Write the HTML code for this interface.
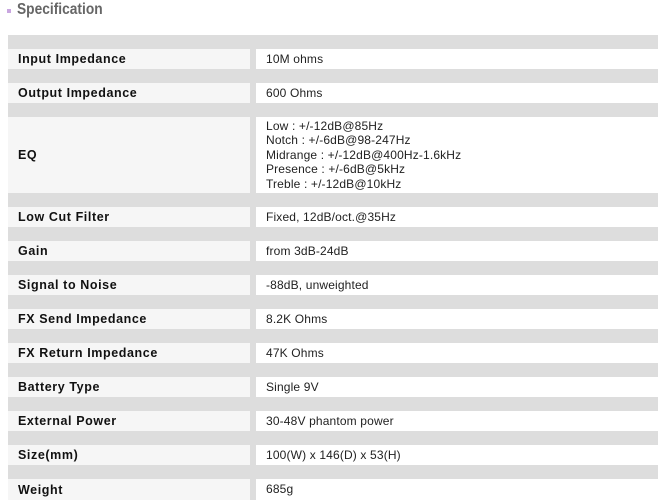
<!DOCTYPE html>
<html><head><meta charset="utf-8"><style>
*{margin:0;padding:0;box-sizing:border-box}
body{width:663px;height:504px;background:#fff;position:relative;overflow:hidden;font-family:"Liberation Sans","Noto Sans CJK KR",sans-serif}
.t{position:absolute;left:17px;top:0px;font-size:16px;font-weight:bold;color:#666;line-height:20px;transform:scaleX(0.86);transform-origin:left top}
.b{position:absolute;left:7px;top:9px;width:4px;height:4px;background:#c9a6e0}
.g{position:absolute;left:8px;width:650px;background:#dddddd}
.l{position:absolute;left:8px;width:242px;background:#f6f6f6;font-size:12.5px;font-weight:bold;color:#111;padding-left:10px;display:flex;align-items:center;letter-spacing:0.6px}
.r{position:absolute;left:256px;width:402px;background:#fff;font-size:12px;color:#222;padding-left:10px;display:flex;align-items:center;line-height:14.4px;letter-spacing:0.15px}
</style></head><body>
<div class="b"></div><div class="t">Specification</div>
<div class="g" style="top:35px;height:465px"></div>

<div class="l" style="top:49px;height:20px">Input Impedance</div><div class="r" style="top:49px;height:20px">10M ohms</div>
<div class="l" style="top:83px;height:20px">Output Impedance</div><div class="r" style="top:83px;height:20px">600 Ohms</div>
<div class="l" style="top:117px;height:76px">EQ</div><div class="r" style="top:117px;height:76px"><div>Low : +/-12dB@85Hz<br>Notch : +/-6dB@98-247Hz<br>Midrange : +/-12dB@400Hz-1.6kHz<br>Presence : +/-6dB@5kHz<br>Treble : +/-12dB@10kHz</div></div>
<div class="l" style="top:207px;height:20px">Low Cut Filter</div><div class="r" style="top:207px;height:20px">Fixed, 12dB/oct.@35Hz</div>
<div class="l" style="top:241px;height:20px">Gain</div><div class="r" style="top:241px;height:20px">from 3dB-24dB</div>
<div class="l" style="top:275px;height:20px">Signal to Noise</div><div class="r" style="top:275px;height:20px">-88dB, unweighted</div>
<div class="l" style="top:309px;height:20px">FX Send Impedance</div><div class="r" style="top:309px;height:20px">8.2K Ohms</div>
<div class="l" style="top:343px;height:20px">FX Return Impedance</div><div class="r" style="top:343px;height:20px">47K Ohms</div>
<div class="l" style="top:377px;height:20px">Battery Type</div><div class="r" style="top:377px;height:20px">Single 9V</div>
<div class="l" style="top:411px;height:20px">External Power</div><div class="r" style="top:411px;height:20px">30-48V phantom power</div>
<div class="l" style="top:445px;height:20px">Size(mm)</div><div class="r" style="top:445px;height:20px">100(W) x 146(D) x 53(H)</div>
<div class="l" style="top:479px;height:21px">Weight</div><div class="r" style="top:479px;height:21px">685g</div>
</body></html>
